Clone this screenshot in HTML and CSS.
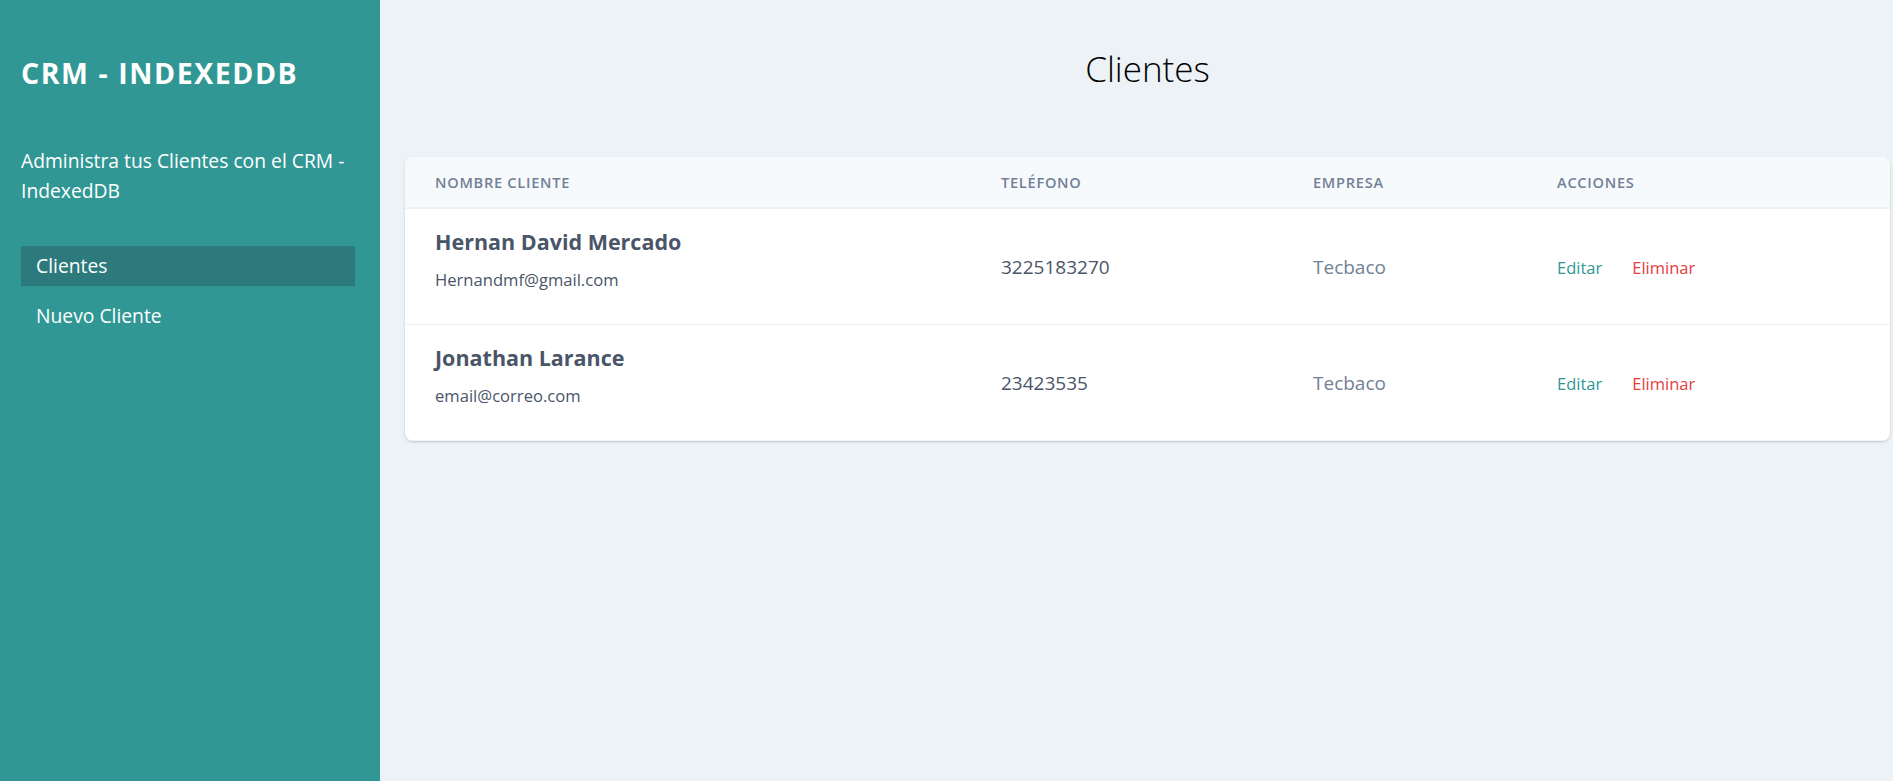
FILE: index.html
```html
<!DOCTYPE html>
<html lang="es">
<head>
<meta charset="utf-8">
<title>CRM - IndexedDB</title>
<link rel="stylesheet" href="styles.css">
</head>
<body>
<div class="layout">
  <aside class="sidebar">
    <h1 class="brand">CRM - IndexedDB</h1>
    <p class="tagline">Administra tus Clientes con el CRM - IndexedDB</p>
    <nav class="nav">
      <a class="nav-link active" href="#">Clientes</a>
      <a class="nav-link" href="#">Nuevo Cliente</a>
    </nav>
  </aside>
  <main class="main">
    <h2 class="page-title">Clientes</h2>
    <div class="card">
      <table class="clients">
        <colgroup>
          <col class="c1"><col class="c2"><col class="c3"><col class="c4">
        </colgroup>
        <thead>
          <tr>
            <th>Nombre Cliente</th>
            <th>Teléfono</th>
            <th>Empresa</th>
            <th>Acciones</th>
          </tr>
        </thead>
        <tbody>
          <tr>
            <td class="client">
              <p class="name">Hernan David Mercado</p>
              <p class="email">Hernandmf@gmail.com</p>
            </td>
            <td class="phone">3225183270</td>
            <td class="company">Tecbaco</td>
            <td class="actions"><a href="#" class="edit">Editar</a><a href="#" class="delete">Eliminar</a></td>
          </tr>
          <tr>
            <td class="client">
              <p class="name">Jonathan Larance</p>
              <p class="email">email@correo.com</p>
            </td>
            <td class="phone">23423535</td>
            <td class="company">Tecbaco</td>
            <td class="actions"><a href="#" class="edit">Editar</a><a href="#" class="delete">Eliminar</a></td>
          </tr>
        </tbody>
      </table>
    </div>
  </main>
</div>
</body>
</html>
```

FILE: styles.css
```css
* { box-sizing: border-box; }
html, body { margin: 0; padding: 0; }
body {
  font-family: "Open Sans", "Noto Sans", sans-serif;
  background: #edf2f7;
  color: #111;
}
.layout {
  display: flex;
  min-height: 781px;
}
.sidebar {
  width: 380px;
  flex: 0 0 380px;
  background: #319795;
  padding: 53px 20px 0 21px;
  color: #fff;
}
.brand {
  margin: 0;
  font-size: 28.5px;
  line-height: 40px;
  font-weight: 700;
  text-transform: uppercase;
  letter-spacing: 0.055em;
}
.tagline {
  margin: 53px 0 0;
  font-size: 19.3px;
  line-height: 30px;
}
.nav {
  margin-top: 40px;
  margin-right: 5px;
  display: flex;
  flex-direction: column;
  gap: 10px;
}
.nav-link {
  display: block;
  padding: 5px 15px;
  font-size: 19.3px;
  line-height: 30px;
  color: #fff;
  text-decoration: none;
}
.nav-link.active { background: #2c7a7b; }
.main {
  flex: 1;
  padding: 46px 3px 0 25px;
}
.page-title {
  margin: 0;
  text-align: center;
  font-size: 35px;
  line-height: 46px;
  font-weight: 300;
  color: #000;
}
.card {
  margin-top: 65px;
  background: #fff;
  border-radius: 8px;
  overflow: hidden;
  box-shadow: 0 1px 3px rgba(0,0,0,0.12), 0 1px 2px rgba(0,0,0,0.07);
}
.clients {
  width: 100%;
  border-collapse: collapse;
  table-layout: fixed;
}
.c1 { width: 566px; }
.c2 { width: 312px; }
.c3 { width: 244px; }
.clients th {
  background: #f7fafc;
  border-bottom: 2px solid #edf2f7;
  padding: 15px 30px;
  text-align: left;
  font-size: 14.6px;
  line-height: 20px;
  font-weight: 600;
  letter-spacing: 0.05em;
  text-transform: uppercase;
  color: #718096;
}
.clients td {
  border-bottom: 1px solid #edf2f7;
  padding: 1px 30px 0;
  vertical-align: middle;
  font-size: 19px;
  line-height: 30px;
}
.clients td.client {
  padding: 15px 30px 32px;
  vertical-align: top;
}
.name {
  margin: 0;
  font-size: 21.5px;
  line-height: 35px;
  font-weight: 700;
  color: #4a5568;
}
.email {
  margin: 8px 0 0;
  font-size: 16.6px;
  line-height: 25px;
  color: #4a5568;
}
.phone { color: #4a5568; }
.company { color: #718096; }
.actions a {
  font-size: 16.5px;
  text-decoration: none;
}
.edit { color: #319795; margin-right: 30px; }
.delete { color: #e53e3e; }
```
